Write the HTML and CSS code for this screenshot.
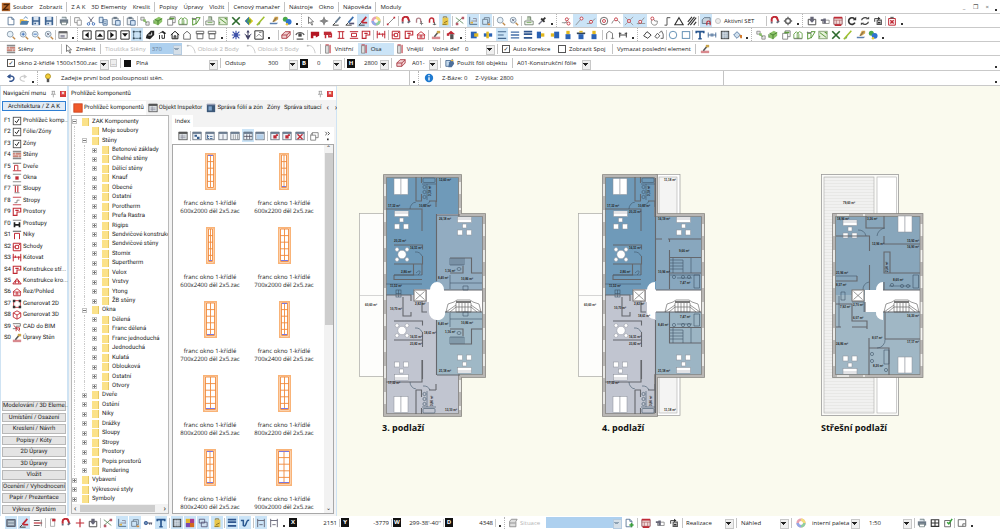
FILE: index.html
```html
<!DOCTYPE html>
<html lang="cs">
<head>
    <meta charset="UTF-8">
    <meta name="viewport" content="width=device-width, initial-scale=1.0">
    <title>ZAK</title>
    <link rel="stylesheet" href="styles.css">
</head>
<body>
    <header>
        <nav class="bar menu">
            <span class="logo" data-icon="logo"></span>
            <button>Soubor</button>
            <button>Zobrazit</button>
            <span class="sep"></span>
            <button>Z A K</button>
            <button>3D Elementy</button>
            <button>Kreslit</button>
            <span class="sep"></span>
            <button>Popisy</button>
            <button>Úpravy</button>
            <button>Vložit</button>
            <span class="sep"></span>
            <button>Cenový manažer</button>
            <span class="sep"></span>
            <button>Nástroje</button>
            <button>Okno</button>
            <span class="sep"></span>
            <button>Nápověda</button>
            <span class="sep"></span>
            <button>Moduly</button>
            <div class="window-buttons">
                <button>_</button>
                <button>❐</button>
                <button>×</button>
            </div>
            <span class="dot"></span>
        </nav>

        <div class="bar">
            <div class="tools t-file" data-tools="new open save save | print | copygray cut copy paste | paste | group cubes gcopy ghouse gflip | stamp gpic gx diamond gline brush rgb"></div>
            <span class="dot"></span>
            <div class="tools grip t-pen" data-tools="pointer move pen penblue penred* wheel | line | magnet magnetgray magnetsmall lockdoc* | axes frame* cube* | zoom zoomall | stamp dropper"></div>
            <span class="dot"></span>
            <div class="tools grip t-snap" data-tools="snap snapend* snapmid* snapcircle snaparc snapcross* snapnear* hand step triangle hatch | set*"></div>
            <label class="radio"><input type="radio" name="set">Aktivní SET</label>
            <div class="tools t-gear" data-tools="| magnet gear"></div>
            <span class="dot"></span>
            <div class="tools grip t-box" data-tools="box boxin calendar | refresh cycle cyclebox | redbox"></div>
            <span class="dot"></span>
        </div>

        <div class="bar">
            <div class="tools t-zoom" data-tools="zoom zoomin zoomout zoomall | window"></div>
            <span class="dot"></span>
            <div class="tools grip t-view" data-tools="left up right down bracket* blackbox househalf house houseline boxtop boxtop"></div>
            <span class="dot"></span>
            <div class="tools grip t-axis" data-tools="bluegrid axis3 boxview"></div>
            <span class="dot"></span>
            <div class="tools t-red" data-tools="| redcube | eye | redflag redwall redi redframe redcorner | dim | redhatch redcorner redhouse | redbrush | redroof"></div>
            <span class="dot"></span>
            <div class="tools grip t-align" data-tools="byalign bymid lines* lines2 lines3 byleft byright byvert bytop byvert | arch hshape"></div>
            <span class="dot"></span>
            <div class="tools grip t-shape" data-tools="poly polys | circle rect | text dimblue fillrect bucket"></div>
            <span class="dot"></span>
            <div class="tools grip t-group" data-tools="group cubes gcopy ghouse gflip gpic gx gline brush rgb"></div>
            <span class="dot"></span>
        </div>

        <div class="bar">
            <button class="cell c-wall"><span data-icon="wall"></span>Stěny</button>
            <span class="sep"></span>
            <button class="cell c-edit"><span data-icon="pointer"></span>Změnit</button>
            <span class="sep"></span>
            <label class="cell off" for="thickness">Tloušťka Stěny</label>
            <div class="combo blue w-s"><select id="thickness" disabled><option>370</option></select></div>
            <button class="cell off c-arc"><span data-icon="arcgray"></span>Oblouk 2 Body</button>
            <button class="cell off c-arc"><span data-icon="arcgray"></span>Oblouk 3 Body</button>
            <span class="cell off" data-icon="arcgray"></span>
            <span class="sep"></span>
            <button class="cell c-side"><span data-icon="inner"></span>Vnitřní</button>
            <button class="cell c-side on"><span data-icon="inner"></span>Osa</button>
            <button class="cell c-side"><span data-icon="inner"></span>Vnější</button>
            <label class="cell" for="offset">Volně def</label>
            <div class="combo w-s"><select id="offset"><option>0</option></select></div>
            <span class="sep"></span>
            <label class="cell c-check"><input type="checkbox" checked>Auto Korekce</label>
            <label class="cell c-check"><input type="checkbox">Zobrazit Spoj</label>
            <span class="sep"></span>
            <button class="cell">Vymazat poslední element</button>
            <span class="sep"></span>
            <button class="cell" aria-label="Štětec"><span data-icon="redbrush"></span></button>
        </div>

        <div class="bar bar-tall">
            <input class="check-first" type="checkbox" checked aria-label="Aktivní">
            <div class="combo w-xl"><select aria-label="Komponent"><option>okno 2-křídlé 1500x1500.zac</option></select></div>
            <button class="more">...</button>
            <span class="sep"></span>
            <span class="swatch"></span>
            <div class="combo w-l"><select aria-label="Typ čáry"><option>Plná</option></select></div>
            <span class="sep"></span>
            <label class="cell c-gap" for="gap">Odstup</label>
            <div class="combo w-s"><select id="gap"><option>300</option></select></div>
            <label class="key" for="dim-b">B</label>
            <div class="combo value w-s"><select id="dim-b"><option>0</option></select></div>
            <span class="sep"></span>
            <label class="key" for="dim-h">H</label>
            <div class="combo value w-s"><select id="dim-h"><option>2800</option></select></div>
            <span class="sep"></span>
            <span class="cell" data-icon="redcube"></span>
            <div class="combo w-xs"><select aria-label="Fólie"><option>A01-</option></select></div>
            <span class="sep"></span>
            <button class="cell c-foil"><span data-icon="foil"></span>Použít fóli objektu</button>
            <span class="sep"></span>
            <div class="combo w-m"><select aria-label="Fólie objektu"><option>A01-Konstrukční fólie</option></select></div>
            <span class="dot last"></span>
        </div>

        <div class="bar bar-tall">
            <div class="tools t-undo" data-tools="undo redo"></div>
            <span class="dot"></span>
            <div class="message grip"><span data-icon="bulb"></span>Zadejte první bod posloupnosti stěn.</div>
            <span class="dot"></span>
            <div class="info grip"><span data-icon="info"></span><span>Z-Báze: 0</span><span>Z-Výška: 2800</span></div>
            <span class="dot last"></span>
        </div>
    </header>

    <main>
        <aside class="panel navigation">
            <h2 class="panel-title">Navigační menu<span class="pin" data-icon="pin"></span><button class="close">×</button></h2>
            <button class="group-button active">Architektura / Z A K</button>
            <ul class="shortcuts"></ul>
            <div class="groups">
                <button class="group-button">Modelování / 3D Eleme...</button>
                <button class="group-button">Umístění / Osazení</button>
                <button class="group-button">Kreslení / Návrh</button>
                <button class="group-button">Popisy / Kóty</button>
                <button class="group-button">2D Úpravy</button>
                <button class="group-button">3D Úpravy</button>
                <button class="group-button">Vložit</button>
                <button class="group-button">Ocenění / Vyhodnocení</button>
                <button class="group-button">Papír / Prezentace</button>
                <button class="group-button">Výkres / Systém</button>
            </div>
        </aside>

        <aside class="panel components">
            <h2 class="panel-title">Prohlížeč komponentů<span class="pin" data-icon="pin"></span><button class="close">×</button></h2>
            <div class="tabs">
                <button class="tab active"><span data-icon="orange"></span>Prohlížeč komponentů</button>
                <button class="tab"><span data-icon="sheet"></span>Objekt Inspektor</button>
                <button class="tab"><span data-icon="zones"></span>Správa fólií a zón</button>
                <button class="tab">Zóny</button>
                <button class="tab">Správa situací</button>
                <button class="tab arrow">‹</button>
                <button class="tab arrow">›</button>
            </div>
            <div class="browser">
                <div class="tree-box">
                    <ul class="tree"></ul>
                    <div class="hscroll"><span>‹</span><i></i><span>›</span></div>
                </div>
                <div class="index">
                    <button class="index-tab">Index</button>
                    <div class="tools t-index" data-tools="sheet | tblsmall tbltree tblcol tblcols tblgrid* tblfill | tblred tblred tblx | cubegray more"></div>
                    <div class="list-box">
                        <div class="items"></div>
                        <div class="vscroll"><span>⌃</span><i></i><span>⌄</span></div>
                    </div>
                </div>
            </div>
        </aside>

        <section class="canvas">
            <svg viewBox="337 86 663 430" preserveAspectRatio="xMinYMin meet">
                <defs>
                    <pattern id="boards" width="6" height="3" patternUnits="userSpaceOnUse">
                        <rect width="6" height="3" fill="#f1f1f0"/>
                        <path d="M0 .5H6" stroke="#dededc" stroke-width=".5"/>
                    </pattern>
                    <g id="lounge" class="fur">
                        <rect x="0" y="0" width="14" height="5.500"/><path d="M0 2H14"/>
                        <rect x="5" y="7" width="4" height="4"/>
                        <rect x="0" y="13" width="5" height="5"/><rect x="9" y="13" width="5" height="5"/>
                    </g>
                    <g id="bed" class="fur"><rect width="7" height="16"/><rect x="7" width="7" height="16"/></g>
                    <g id="dining" class="fur">
                        <circle cx="-5" cy="-5" r="1.900"/><circle cx="5" cy="-5" r="1.900"/>
                        <circle cx="-5" cy="5" r="1.900"/><circle cx="5" cy="5" r="1.900"/><circle r="4.200"/>
                    </g>
                    <g id="lift"><rect width="12" height="11" fill="#fff" stroke="#77706c"/><path d="M1.500 1.500L10.500 9.500M10.500 1.500L1.500 9.500" stroke="#555" stroke-width=".6"/></g>
                    <g id="steps" fill="none" stroke="#555" stroke-width=".6">
                        <path d="M0 12L2 4L8 2L11 0H24L27 2L33 4L35 12M10 3V12H25V3M13 3V12M16 3V12M19 3V12M22 3V12M10 7H25M0 12L10 5M4 12L10 7M35 12L25 5M31 12L25 7"/>
                        <path d="M10 2H25" stroke-width="1.600"/>
                    </g>
                    <!-- left flat without the dining corner -->
                    <g id="flat">
                        <use href="#bed" x="11" y="4.500"/>
                        <use href="#lounge" x="11.500" y="37"/>
                        <path class="wall" d="M38.500 3V9M38.500 20V27H33M33 27V3M46 27H53M3 35H39V57M53 27V33"/>
                        <path class="thin" d="M39 10H53M44 10V26M47 27A7 7 0 0 1 40 31M27 35A7 7 0 0 1 33 28"/>
                        <rect class="thin" x="40" y="4" width="12" height="4.500" rx="1"/>
                        <circle class="thin" cx="41.500" cy="13" r="1.600"/><circle class="thin" cx="41.500" cy="18" r="1.600"/><circle class="thin" cx="41.500" cy="23" r="1.600"/>
                    </g>
                    <g id="diningroom">
                        <path class="wall" d="M11 0H39.500V4.500M39.500 11V19H11"/>
                        <use href="#dining" x="19" y="9.500"/>
                        <path class="thin" d="M39 11A7 7 0 0 0 32 7"/>
                    </g>
                    <g id="baths">
                        <path class="wall" d="M11 101V105.500H39M30.500 90V101H11M39 90V101"/>
                        <path class="thin" d="M3 110H39M11 101H39M33 99C38 94 38 99 35 101"/>
                        <rect class="thin" x="13" y="116" width="5" height="7"/><path class="thin" d="M13 119.500H18M15.500 116V123"/>
                    </g>
                    <g id="studio">
                        <path class="wall" d="M67 84H88.500V99H99M67 99H80V92"/>
                        <path class="thin" d="M67 84V91H81V84M69 84V91M71 84V91M73 84V91M75 84V91M77 84V91M79 84V91M67 109H99M67 101V115M80 112H85V116H80Z"/>
                        <ellipse class="thin" cx="76" cy="95" rx="2" ry="1.500"/>
                    </g>
                    <g id="flat-right">
                        <path class="wall" d="M67.500 65V68M67.500 76V115M67.500 83.500H99M67.500 99H99"/>
                        <path class="thin" d="M68 86H81V98.500M68 89H81M68 92H81M68 95H81M89 84V99M71 84V99M68 101H98M92 101H97.500V114H92ZM75 104H90"/>
                        <circle class="thin" cx="72" cy="103" r="1.600"/><circle class="thin" cx="81" cy="103" r="1.600"/><circle class="thin" cx="87" cy="103" r="1.600"/>
                    </g>
                </defs>

                <!-- 3. podlaží -->
                <g transform="translate(383 174)">
                    <rect x="-23.500" y="39.500" width="24" height="163" fill="#fdfdfb" stroke="#a8a8a4" stroke-width=".7"/>
                    <path d="M-23.500 121.500H0" stroke="#bbb" stroke-width=".6"/>
                    <path fill="#c1c5d0" d="M2 2H77V40H101V202H77V241H2Z"/>
                    <path fill="#6f9ab9" d="M2 2H77V40H54V115H31V121H2Z"/>
                    <path fill="#92acc1" d="M54 41H100V116H54Z"/>
                    <path fill="#9fb8c6" d="M54 138H100V201H54Z"/>
                    <path fill="#fff" d="M44 116H47A7 8 0 0 1 54 108A7 8 0 0 1 61 116H99V138H62A7 7 0 0 1 54 146A8 8 0 0 1 46 138V128H44Z"/>
                    <path class="outer-line" d="M2 2H77V41H101V202H77V241H2Z"/>
                    <path class="outer" d="M2 2H77V41H101V202H77V241H2Z"/>
                    <path class="panes" d="M2 10V236M101 50V196M77 8V36M77 206V236"/>
                    <use href="#flat"/>
                    <use href="#flat" transform="matrix(1 0 0 -1 0 243)"/>
                    <use href="#diningroom" y="71"/>
                    <use href="#diningroom" y="147"/>
                    <use href="#baths"/>
                    <path class="wall" d="M53.500 4V28M53.500 40V107M53.500 146V201M54 41H77M54 201H77M61 116H99M62 138H99M3 121H28V127M28 138V142H20V123M39 127V138H44M39.500 166V173M39.500 186V205"/>
                    <use href="#lounge" x="74.500" y="43"/>
                    <use href="#lounge" transform="matrix(1 0 0 -1 74.500 199)"/>
                    <use href="#studio"/>
                    <use href="#studio" transform="matrix(1 0 0 -1 0 254)"/>
                    <use href="#lift" x="31" y="116"/>
                    <use href="#steps" x="63" y="126"/>
                    <text x="5" y="33">17,32 m²</text><text x="36" y="33">10,60 m²</text><text x="56" y="7">12,60 m²</text>
                    <text x="11" y="68">20,23 m²</text><text x="27" y="75">16,51 m²</text><text x="18" y="99">2,86 m²</text>
                    <text x="7" y="113">11,52 m²</text><text x="56" y="46">26,18 m²</text><text x="62" y="98">1,16 m²</text>
                    <text x="55" y="105">8,40 m²</text><text x="78" y="106">10,86 m²</text><text x="-18" y="132">60,60 m²</text>
                    <text x="7" y="136">10,70 m²</text><text x="32" y="131">2,82 m²</text><text x="41" y="160">18,61 m²</text>
                    <text x="27" y="164">16,51 m²</text><text x="27" y="171">23,82 m²</text><text x="55" y="151">8,40 m²</text>
                    <text x="62" y="159">1,16 m²</text><text x="78" y="150">10,86 m²</text><text x="56" y="198">21,18 m²</text>
                    <text x="5" y="210">17,32 m²</text><text x="62" y="237">13,10 m²</text>
                    <text transform="translate(48 22) rotate(-90)">3,78 m²</text><text transform="translate(50 232) rotate(-90)">3,86 m²</text>
                </g>

                <!-- 4. podlaží -->
                <g transform="translate(602 174)">
                    <rect x="-23.500" y="39.500" width="24" height="163" fill="#fdfdfb" stroke="#a8a8a4" stroke-width=".7"/>
                    <path d="M-23.500 121.500H0" stroke="#bbb" stroke-width=".6"/>
                    <rect x="54" y=".5" width="24" height="241" fill="#fff" stroke="#999" stroke-width=".7"/>
                    <rect x="57" y="3" width="18" height="236" fill="#f4f4f3" stroke="#aaa" stroke-width=".6"/>
                    <path fill="#c1c5d0" d="M2 2H54V241H2Z"/>
                    <path fill="#6f9ab9" d="M2 2H54V115H31V121H2Z"/>
                    <path fill="#88a7be" d="M54 41H101V116H54Z"/>
                    <path fill="#9cb5c4" d="M54 138H101V201H54Z"/>
                    <path fill="#fff" d="M44 116H45A8 8 0 0 1 53 108V116H99V138H53V145A7 7 0 0 1 45 138V128H44Z"/>
                    <path class="outer-line" d="M2 2H54V41H101V202H54V241H2Z"/>
                    <path class="outer" d="M2 2H54V41H101V202H54V241H2Z"/>
                    <path fill="#fff" d="M50 116H60V138H50Z"/>
                    <path class="panes" d="M2 10V236M101 50V196"/>
                    <use href="#flat"/>
                    <use href="#flat" transform="matrix(1 0 0 -1 0 243)"/>
                    <use href="#diningroom" y="71"/>
                    <use href="#diningroom" y="147"/>
                    <use href="#baths"/>
                    <path class="wall" d="M53.500 4V107M53.500 146V239M54 116H99M54 138H99M3 121H28V127M28 138V142H20V123M39 127V138H44M54 65H60M66 65H99M39.500 166V173M39.500 186V205"/>
                    <use href="#lounge" x="74.500" y="43"/>
                    <use href="#lounge" transform="matrix(1 0 0 -1 74.500 199)"/>
                    <use href="#flat-right"/>
                    <path class="wall" d="M67.500 138V169H99M67.500 153.500H99"/>
                    <path class="thin" d="M68 156H81V169M68 159H81M68 162H81M68 165H81M89 154V169M71 154V169M92 140H97.500V152H92ZM75 150H90"/>
                    <circle class="thin" cx="72" cy="151" r="1.600"/><circle class="thin" cx="81" cy="151" r="1.600"/><circle class="thin" cx="87" cy="151" r="1.600"/>
                    <use href="#lift" x="31" y="116"/>
                    <use href="#steps" x="63" y="126"/>
                    <text x="5" y="33">17,32 m²</text><text x="36" y="33">10,60 m²</text><text x="62" y="7">11,18 m²</text>
                    <text x="27" y="39">20,23 m²</text><text x="27" y="75">16,51 m²</text><text x="18" y="99">2,86 m²</text>
                    <text x="7" y="113">11,52 m²</text><text x="56" y="46">16,19 m²</text><text x="77" y="78">9,66 m²</text>
                    <text x="56" y="99">10,96 m²</text><text x="78" y="110">7,47 m²</text><text x="-18" y="132">60,60 m²</text>
                    <text x="12" y="135">10,70 m²</text><text x="32" y="131">2,82 m²</text><text x="36" y="143">18,61 m²</text>
                    <text x="27" y="164">16,51 m²</text><text x="27" y="171">23,82 m²</text><text x="78" y="144">7,47 m²</text>
                    <text x="56" y="152">8,40 m²</text><text x="56" y="198">21,18 m²</text>
                    <text x="5" y="210">17,32 m²</text><text x="62" y="237">11,18 m²</text>
                    <text transform="translate(48 22) rotate(-90)">3,78 m²</text><text transform="translate(50 232) rotate(-90)">3,86 m²</text>
                </g>

                <!-- Střešní podlaží -->
                <g transform="translate(821 174)">
                    <rect x=".5" y=".5" width="77" height="241" fill="#fbfbf8" stroke="#999" stroke-width=".8"/>
                    <rect x="3" y="3" width="50" height="236" fill="url(#boards)" stroke="#aaa" stroke-width=".6"/>
                    <rect x="56" y="3" width="19.500" height="236" fill="#fff" stroke="#aaa" stroke-width=".6"/>
                    <path fill="#88a6bb" d="M13 41H100V118H44V121H13Z"/>
                    <path fill="#a0b7c5" d="M13 121H44V138H100V201H13Z"/>
                    <path fill="#fff" d="M44 116H55A7 8 0 0 1 62 108V116H99V138H62V146A7 7 0 0 1 55 138H44Z"/>
                    <rect class="outer-line" x="13" y="41" width="87.500" height="161"/>
                    <rect class="outer" x="13" y="41" width="87.500" height="161"/>
                    <path class="panes" d="M13 50V196M100.500 50V196M16 41H44M16 202H44"/>
                    <use href="#lounge" x="22" y="46"/>
                    <use href="#bed" x="77" y="42"/>
                    <use href="#bed" x="77" y="183"/>
                    <use href="#lounge" transform="matrix(1 0 0 -1 22 200)"/>
                    <path class="wall" d="M45 42V54H63V42M15 62H48.500V77M48.500 91V116M63 62V70H99M63 78H69V99H63ZM15 107H36V102M63 99H99M63 116V108M62 116H99M62 138H99M44 138V128M15 130H31V147H46V153H31M46 147V155M15 153H20M64 138V165M64 165H99M48 164V201M48 174H68V201"/>
                    <path class="thin" d="M37 56A8 8 0 0 1 45 62M56 62A9 9 0 0 1 64 54M42 116A8 8 0 0 1 48 108M92 101H97.500V114H92ZM68 112H90M18 122V153M20 118H24V126H20ZM63 176H68V190H63ZM56 174A8 8 0 0 0 64 165M15 102H36M31 128H43V138"/>
                    <circle class="thin" cx="71" cy="111" r="1.600"/><circle class="thin" cx="81" cy="112" r="1.600"/><circle class="thin" cx="87" cy="112" r="1.600"/>
                    <circle class="thin" cx="51" cy="180" r="1.600"/><circle class="thin" cx="51" cy="187" r="1.600"/><circle class="thin" cx="65" cy="196" r="1.600"/>
                    <use href="#lift" x="31" y="116"/>
                    <use href="#steps" x="63" y="126"/>
                    <text x="22" y="30">79,60 m²</text><text x="16" y="46">18,96 m²</text><text x="46" y="46">3,26 m²</text>
                    <text x="51" y="71">12,96 m²</text><text x="86" y="68">15,92 m²</text><text x="86" y="74">16,90 m²</text>
                    <text x="15" y="100">21,96 m²</text><text x="15" y="112">8,37 m²</text><text x="72" y="107">8,60 m²</text>
                    <text x="19" y="134">7,92 m²</text><text x="32" y="132">2,70 m²</text><text x="32" y="145">6,07 m²</text>
                    <text x="86" y="143">16,30 m²</text><text x="51" y="165">8,07 m²</text><text x="15" y="171">24,86 m²</text>
                    <text x="86" y="169">17,17 m²</text><text x="52" y="193">8,20 m²</text>
                    <text transform="translate(67 98) rotate(-90)">2,56 m²</text>
                </g>

                <text class="floor" x="382" y="431">3. podlaží</text>
                <text class="floor" x="602" y="431">4. podlaží</text>
                <text class="floor" x="821" y="431">Střešní podlaží</text>
            </svg>
        </section>
    </main>

    <footer class="bar">
        <div class="tools t-status" data-tools="keyboard* penred* listred | redpage magnet cross box | axes frame* cube* key text* | fillrect* colorbox* layers* lockdoc* | lines3* curve* | dimh* dimh"></div>
        <span class="dot"></span>
        <label class="key" for="pos-x">X</label><input class="coord" id="pos-x" value="2151">
        <label class="key" for="pos-y">Y</label><input class="coord" id="pos-y" value="-3779">
        <label class="key" for="pos-w">W</label><input class="coord" id="pos-w" value="299-38'-40''">
        <label class="key" for="pos-d">D</label><input class="coord" id="pos-d" value="4348">
        <span class="dot"></span>
        <label class="cell off grip c-situation" for="situation"><span data-icon="drawer"></span>Situace</label>
        <div class="combo blue w-m"><select id="situation" disabled><option></option></select></div>
        <div class="tools t-sit" data-tools="addpage | calendar boxin cyclebox |"></div>
        <div class="combo w-n"><select aria-label="Fáze"><option>Realizace</option></select></div>
        <span class="sep"></span>
        <div class="combo w-n"><select aria-label="Zobrazení"><option>Náhled</option></select></div>
        <span class="sep"></span>
        <span class="cell" data-icon="wheel"></span>
        <div class="combo w-n"><select aria-label="Paleta"><option>interní paleta</option></select></div>
        <div class="combo value w-n"><select aria-label="Měřítko"><option>1:50</option></select></div>
        <span class="sep"></span>
        <div class="tools t-end" data-tools="print grid4 checkpage | note"></div>
        <span class="dot"></span>
    </footer>

    <script src="script.js"></script>
</body>
</html>
```

FILE: styles.css
```css
* {
    box-sizing: border-box;
}

body {
    display: flex;
    flex-direction: column;
    height: 100vh;
    margin: 0;
    overflow: hidden;
    background: #fff;
    color: #222;
    font-family: "Open Sans", "Noto Sans", sans-serif;
    font-size: 6px;
    line-height: 8px;
}

button, select, input {
    margin: 0;
    padding: 0;
    border: 0;
    border-radius: 0;
    background: none;
    color: inherit;
    font: inherit;
    text-rendering: inherit;
    white-space: nowrap;
}

ul {
    margin: 0;
    padding: 0;
    list-style: none;
}

svg {
    display: block;
}

[data-icon] {
    display: block;
    flex: none;
    width: 10px;
    height: 10px;
}

/* bars */
.bar {
    display: flex;
    align-items: center;
    height: 14px;
    border-bottom: 1px solid #c9c9c9;
    white-space: nowrap;
}

.bar-tall {
    height: 15px;
}

.menu button {
    padding: 0 3px;
}

.logo {
    margin: 0 -1px 0 1px;
}

.sep {
    flex: none;
    width: 1px;
    height: 10px;
    margin: 0 1px;
    background: #c4c4c4;
}

.window-buttons {
    margin-left: auto;
    color: #555;
}

.dot {
    flex: none;
    width: 2px;
    height: 2px;
    margin: 7px 3px 0;
    background: #333;
}

.dot.last {
    margin-left: auto;
}

.grip {
    border-left: 1px dotted #b5b5b5;
}

.tools {
    display: flex;
    flex: none;
    align-items: center;
    justify-content: space-between;
    padding-left: 5px;
}

.tools.grip {
    padding-left: 3px;
}

.tools .sep {
    margin: 0;
}

.tool {
    display: flex;
    align-items: center;
    justify-content: center;
    width: 12px;
    height: 13px;
}

.tool svg {
    width: 10px;
    height: 10px;
}

.on {
    background: #cbe4f7;
}

.t-file { width: 293px; }
.t-pen { width: 247px; }
.t-snap { width: 156px; }
.t-gear { width: 28px; padding: 0; margin-left: 12px; }
.t-box { width: 96px; }
.t-zoom { width: 69px; }
.t-view { width: 141px; }
.t-axis { width: 39px; }
.t-red { width: 184px; }
.t-align { width: 164px; }
.t-shape { width: 106px; }
.t-group { width: 128px; }
.t-undo { width: 29px; }
.t-status { width: 280px; }
.t-sit { width: 60px; padding: 0; }
.t-end { width: 52px; padding: 0; }

.radio {
    display: flex;
    align-items: center;
    gap: 3px;
}

input[type="radio"] {
    width: 6px;
    height: 6px;
    appearance: none;
    border: 1px solid #c4c4c4;
    border-radius: 50%;
    background: #eee;
    margin-left: 3px;
}

input[type="checkbox"] {
    flex: none;
    width: 8px;
    height: 8px;
    appearance: none;
    border: 1px solid #555;
    background: #fff;
    line-height: 6px;
    text-align: center;
}

input[type="checkbox"]:checked::before {
    content: "✓";
    font-family: "DejaVu Sans", sans-serif;
    color: #222;
}

.cell {
    display: flex;
    flex: none;
    align-items: center;
    gap: 2px;
    height: 12px;
    margin: 0 3px;
}

.off {
    color: #b4b4b4;
}

.cell.on {
    background: #cbe4f7;
}

.c-wall { width: 54px; padding-left: 3px; }
.c-edit { width: 34px; margin: 0 1px; }
.c-arc { width: 54px; }
.c-side { width: 36px; margin: 0; padding-left: 1px; }
.c-check { width: 50px; gap: 3px; }
.c-gap { width: 37px; }
.c-foil { width: 63px; }
.c-situation { width: 37px; padding-left: 3px; margin: 0 4px 0 0; }

.combo {
    position: relative;
    flex: none;
    height: 11px;
    margin: 0 1px;
}

.combo select {
    width: 100%;
    height: 100%;
    appearance: none;
    padding: 0 9px 0 2px;
    opacity: 1;
}

.combo.value select {
    padding-left: 7px;
}

/* drop-down arrow over the right end of the field */
.combo::after {
    content: "";
    position: absolute;
    right: 0;
    top: 2px;
    width: 7px;
    height: 8px;
    border: 1px solid #c8c8c8;
    background: linear-gradient(#222, #222) 0 2px / 5px 1px no-repeat, linear-gradient(#222, #222) 1px 3px / 3px 1px no-repeat, linear-gradient(#222, #222) 2px 4px / 1px 1px no-repeat, #efefef;
    pointer-events: none;
}

.combo.blue select {
    background: #add0ef;
    color: #6c8198;
}

.combo.blue::after {
    border-color: #b5cbe0;
    background: linear-gradient(#8fa3b5, #8fa3b5) 0 2px / 5px 1px no-repeat, linear-gradient(#8fa3b5, #8fa3b5) 1px 3px / 3px 1px no-repeat, #d5dfe8;
}

.w-xs { width: 28px; }
.w-s { width: 32px; }
.w-n { width: 50px; }
.w-m { width: 76px; }
.w-l { width: 84px; }
.w-xl { width: 93px; }

.check-first {
    margin-left: 7px;
}

.more {
    width: 7px;
    height: 8px;
    margin-right: 2px;
    border: 1px solid #ccc;
    background: #eee;
    color: #777;
    line-height: 4px;
}

.swatch {
    width: 7px;
    height: 7px;
    margin: 0 2px;
    background: #111;
}

.key {
    flex: none;
    width: 8px;
    height: 9px;
    margin: 0 1px;
    background: #111;
    color: #fff;
    font-weight: bold;
    line-height: 9px;
    text-align: center;
}

.coord {
    width: 42px;
    border-right: 1px solid #ccc;
    padding-right: 2px;
    text-align: right;
}

.message, .info {
    display: flex;
    align-items: center;
    gap: 8px;
    height: 14px;
    padding-left: 5px;
    border-right: 1px solid #c4c4c4;
}

.message {
    width: 373px;
}

.info {
    width: 306px;
}

/* panels */
main {
    display: flex;
    flex: 1;
    min-height: 0;
}

.panel {
    display: flex;
    flex: none;
    flex-direction: column;
    padding: 1px 2px 2px;
    border-left: 1px solid #cfe3f3;
    border-right: 1px solid #cfe3f3;
    font-family: Roboto, "Liberation Sans", sans-serif;
    text-rendering: geometricPrecision;
}

.navigation {
    width: 68px;
    padding: 1px 1px 2px;
}

.components {
    width: 269px;
    background: #f3f3f3;
}

.panel-title {
    display: flex;
    flex: none;
    align-items: center;
    height: 13px;
    margin: 0;
    padding-left: 1px;
    font-size: 6px;
    font-weight: normal;
}

.components .panel-title {
    margin: 0 -2px;
    padding: 0 3px 0 2px;
    background: #fff;
}

.pin {
    width: 8px;
    height: 8px;
    margin-left: auto;
}

.close {
    width: 6px;
    height: 6px;
    margin-left: 3px;
    background: #d63a3a;
    color: #fff;
    font-weight: bold;
    line-height: 6px;
}

.group-button {
    flex: 1;
    min-height: 0;
    border: 1px solid #b8b8b8;
    background: #e4e4e4;
    line-height: 7px;
}

.group-button.active {
    flex: none;
    height: 10px;
    margin-top: 1px;
    border-color: #2f7fd3;
    background: #e2ecf6;
}

.shortcuts {
    display: grid;
    grid-auto-rows: 1fr;
    height: 229px;
    margin-top: 4px;
}

.shortcuts li {
    display: flex;
    align-items: center;
    gap: 1px;
    padding-left: 2px;
    white-space: nowrap;
}

.shortcuts b {
    width: 7px;
    font-weight: normal;
}

.groups {
    display: flex;
    flex-direction: column;
    gap: 2px;
    height: 113px;
    margin-top: auto;
}

.tabs {
    display: flex;
    flex: none;
    align-items: center;
    height: 15px;
}

.tab {
    display: flex;
    flex: none;
    align-items: center;
    gap: 1px;
    height: 14px;
    padding: 0 2px;
}

.tab.active {
    background: #fff;
}

.tab.arrow {
    padding: 0 3px;
    font-size: 8px;
}

.browser {
    display: flex;
    flex: 1;
    gap: 3px;
    min-height: 0;
}

.tree-box {
    display: flex;
    flex-direction: column;
    width: 98px;
    border: 1px solid #b9b9b9;
    background: #fff;
}

.tree {
    display: grid;
    flex: 1;
    grid-auto-rows: 1fr;
    padding-top: 1px;
    overflow: hidden;
}

.tree li {
    display: flex;
    align-items: center;
    min-height: 0;
    white-space: nowrap;
}

.guide {
    flex: none;
    align-self: stretch;
    width: 8px;
    margin-left: 2px;
    border-left: 1px dotted #ccc;
}

.toggle {
    flex: none;
    width: 5px;
    height: 5px;
    border: 1px solid #c2c2c2;
    background: linear-gradient(#777, #777) 0 1px / 3px 1px no-repeat, #fff;
}

.toggle.none {
    border-color: transparent;
    background: none;
}

.toggle.plus {
    background: linear-gradient(#777, #777) 0 1px / 3px 1px no-repeat, linear-gradient(#777, #777) 1px 0 / 1px 3px no-repeat, #fff;
}

.folder {
    flex: none;
    width: 7px;
    height: 8px;
    margin: 0 3px 0 5px;
    border-right: 1px solid #e6c964;
    background: #fbe28a;
}

.hscroll, .vscroll {
    display: flex;
    align-items: center;
    justify-content: space-between;
    background: #f2f2f2;
}

.hscroll {
    height: 9px;
    padding: 0 2px;
    font-size: 8px;
}

.hscroll i {
    width: 75px;
    height: 7px;
    margin-right: 5px;
    background: #cdcdcd;
}

.index {
    display: flex;
    flex: 1;
    flex-direction: column;
    min-width: 0;
    background: #f3f3f3;
}

.index-tab {
    align-self: flex-start;
    width: 21px;
    height: 12px;
    background: #fff;
    font-family: "Open Sans", sans-serif;
}

.t-index {
    height: 17px;
    padding: 0 1px 0 5px;
    background: #fff;
}

.list-box {
    display: flex;
    flex: 1;
    min-height: 0;
    border: 1px solid #a8a8a8;
    background: #fff;
}

.items {
    display: grid;
    flex: 1;
    grid-template-columns: 74px 74px;
    grid-auto-rows: 74px;
    padding-top: 8px;
    overflow: hidden;
    font-family: "Open Sans", sans-serif;
    line-height: 8px;
    text-align: center;
}

.item svg {
    height: 37px;
    margin: 0 auto 9px;
}

.item p {
    margin: 0;
}

.vscroll {
    flex-direction: column;
    width: 9px;
}

.vscroll i {
    width: 8px;
    height: 172px;
    margin-bottom: auto;
    background: #cdcdcd;
}

/* drawing */
.canvas {
    flex: 1;
    min-width: 0;
    background: #fafaee;
}

.canvas svg {
    width: 100%;
    height: 100%;
}

.canvas text {
    fill: #222;
    font-family: "Liberation Sans", Arial, sans-serif;
    font-size: 3px;
    font-weight: bold;
}

.canvas .floor {
    fill: #111;
    font-family: "Open Sans", sans-serif;
    font-size: 9px;
}

.fur {
    fill: #fff;
    stroke: #8a8f98;
    stroke-width: .5;
}

.wall {
    fill: none;
    stroke: #65676c;
    stroke-width: 1.1;
}

.thin {
    fill: none;
    stroke: #3f5668;
    stroke-width: .6;
}

.outer-line {
    fill: none;
    stroke: #76736f;
    stroke-width: 3.6;
}

.outer {
    fill: none;
    stroke: #b9b7b5;
    stroke-width: 2.4;
}

.panes {
    fill: none;
    stroke: #f3f3f0;
    stroke-width: 1.6;
    stroke-dasharray: 12 14;
}

footer.bar {
    flex: none;
    height: 13px;
    border-bottom: 0;
}
```

FILE: script.js
```js
const G = '#5b9a3c';   // green
const R = '#c02a35';   // red
const B = '#2b62b4';   // blue
const K = '#444';

function line(d, color, width) {
    return `<path d="${d}" fill="none" stroke="${color || K}" stroke-width="${width || 1.2}"/>`;
}

function fill(d, color) {
    return `<path d="${d}" fill="${color || K}"/>`;
}

const doc = fill('M2 1H7L10 4V11H2Z', '#fff') + line('M2.500 1.500H7L9.500 4V10.500H2.500ZM7 1.500V4H9.500', '#4f6d8f', 1);
const lens = '<circle cx="5" cy="5" r="3.500" fill="#e6f1f9" stroke="#8495a5"/>' + line('M8 8L11 11', '#c08a4a', 1.6);
const frameBox = line('M1 1H11V11H1Z', '#333', 1.2);
const magnet = line('M2 7V5A3.500 3.500 0 0 1 9 4L10 6', R, 2.4) + line('M2 7V9M8 8L11 6', '#667', 2.2);
const table = '<rect x="1" y="1.500" width="10" height="9" fill="#eef3f8" stroke="#67707c"/>' + fill('M1 1H11V3.500H1Z', '#6b7c90');
const blueDot = (x, y, w, h) => fill(`M${x} ${y}h${w}v${h}h-${w}Z`, B);
const yellowDot = (x, y, w, h) => fill(`M${x} ${y}h${w}v${h}h-${w}Z`, '#e2b81f');
const pencil = (c) => line('M4 8L10 1', c, 2) + line('M1 11L4 8M1 11H8', K, 1.2);
const snapPoint = (x, y) => `<circle cx="${x}" cy="${y}" r="1.800" fill="#fff" stroke="${R}"/>`;

const icons = {
    logo: '<rect x="1" y="1" width="10" height="10" fill="#b8682a"/>' + line('M3 3H9L3 9H9', '#4d2408', 1.6),
    new: doc,
    open: fill('M1 4H5L6 5H10V10H1Z', '#e8b84b') + fill('M3 6H12L10 10.500H1Z', '#4d7fae') + line('M6 3C8 0 9 1 10 3', '#4d7fae'),
    save: fill('M1 1H11V11H1Z', '#3e6492') + fill('M3 1H9V5H3ZM3 7H9V11H3Z', '#dbe6f2') + fill('M4 8H6V10H4Z', '#3e6492'),
    print: fill('M3 1H9V4H3Z', '#d9e1e8') + fill('M1 4H11V9H1Z', '#6c7a88') + fill('M3 7H9V11H3Z', '#fff') + line('M3 7.500H9V10.500H3ZM3.500 1.500H8.500V4', '#566', .8),
    copygray: line('M2 2H8M2 2V8H5', '#999') + line('M5 5H10V11H5Z', '#8a8a8a', 1) + line('M7 3L9 4', '#888'),
    cut: line('M3 1L8 8M9 1L4 8', '#667', 1.1) + '<circle cx="3" cy="9.500" r="1.500" fill="none" stroke="#2b62b4"/><circle cx="9" cy="9.500" r="1.500" fill="none" stroke="#2b62b4"/>',
    copy: '<path d="M1.500 1.500H6V8H1.500ZM6 4.500H11V11H6Z" fill="#dceaf7" stroke="#44668f"/>' + line('M7 7H10M7 9H10', '#44668f', .8),
    paste: '<path d="M1.500 2.500H8.500V10.500H1.500Z" fill="#e9eef3" stroke="#6a7886"/>' + fill('M3 1H7V3.500H3Z', '#6a7886') + '<path d="M5.500 5.500H11V11H5.500Z" fill="#d3e5f7" stroke="#44668f"/>',
    group: '<path d="M1 1.500H5V5H1ZM7 7H11V11H7Z" fill="#e9e9e9" stroke="#888"/>' + line('M4 5L8 8', G) + fill('M4 4H7V7H4Z', '#8abf6a'),
    cubes: fill('M2 4L7 1L11 3V7L6 11L1 9Z', '#8cc268') + line('M2 4L6 6L11 3M6 6V11M1 9V5', '#3f7a2a', 1),
    gcopy: line('M2 4H8V11H2ZM5 4V1H11V8H8', '#777', 1) + fill('M4 2H10V4H4Z', G),
    ghouse: line('M1 10V5L4 2L7 5V10ZM5 10V4L8 2L11 4V10Z', G, 1) + line('M1 10.500H11', '#777', 1),
    gflip: line('M2 2V11L6 9V4H2M6 10L11 2H6', G, 1.2) + line('M1 3H7', '#777', 1),
    stamp: fill('M4 1H8L9 5H3Z', '#b9cbb3') + line('M1 6H11V10.500H1ZM4 1H8V5', '#6a7a66', 1) + line('M3 8H9', G, 1),
    gpic: '<rect x="1" y="1.500" width="10" height="9" fill="#e4f0d8" stroke="#7b9a6b"/>' + line('M2 3L10 9M8 3H10V5M2 9V7', G, 1.2),
    gx: line('M1.500 1.500L10.500 10.500M10.500 1.500L1.500 10.500', '#2d6a2d', 2),
    diamond: fill('M6 1L11 6L6 11L1 6Z', '#d8c71f') + fill('M6 1L1 6L6 11Z', '#2e72b8') + fill('M4 4H8V8H4Z', '#5aa344'),
    gline: line('M1 11L10 1', '#9fbf2c', 1.8) + line('M3 11L5 8', G, 1),
    brush: fill('M7 1H11V4L7 7H4Z', '#d2a24a') + fill('M1 8H11L9 10H1Z', '#5b7fae') + line('M5 7L9 2', '#555', 1),
    rgb: '<circle cx="4" cy="4" r="3" fill="#4aa84a"/><circle cx="8" cy="7" r="3.500" fill="#2f74d0"/><circle cx="6" cy="10" r="1.500" fill="#e8c53a"/>',
    pointer: '<path d="M3 1V9L5 7.500L7 11L8 10.500L6.500 7H9Z" fill="#fff" stroke="#555" stroke-width=".9"/>',
    move: line('M6 1V11M1 6H11M3 6L6 3L9 6L6 9Z', '#555', 1.1),
    pen: pencil('#6b7f93'),
    penblue: pencil('#3a6fae') + fill('M5 8H11V10H5Z', '#557'),
    penred: pencil(R) + fill('M5 7H11V9H5Z', R),
    wheel: '<circle cx="6" cy="6" r="4" fill="none" stroke="#e8a0b0" stroke-width="3"/><path d="M6 2A4 4 0 0 1 10 6" fill="none" stroke="#f3e07a" stroke-width="3"/><path d="M10 6A4 4 0 0 1 6 10" fill="none" stroke="#8fd0a0" stroke-width="3"/><path d="M6 10A4 4 0 0 1 2 6" fill="none" stroke="#92a8e8" stroke-width="3"/>',
    line: line('M2 10L10 2', '#777', 1) + fill('M1 9H3V11H1ZM9 1H11V3H9Z', R),
    magnet: magnet,
    magnetgray: line('M3 8V5A2.500 2.500 0 0 1 8 5V8', '#b08088', 1.6) + line('M9 6V11M7 9H11', '#777', 1),
    magnetsmall: line('M3 8V5A2.500 2.500 0 0 1 8 5V8', R, 1.8) + line('M9 7V11M7 10H11', '#555', 1),
    lockdoc: fill('M3 2H10V11H3Z', '#e9c74a') + line('M4 2V1H8V2M5 8L9 6M3 10H8', '#7a6420', 1),
    axes: line('M1 2L10 9M1 9L9 2', '#5b8a5b', 1) + fill('M8 1H11V4H8ZM1 8H4V11H1Z', '#b85a6a'),
    frame: line('M2 1V10H11', '#55718f', 1.2) + line('M4 6H10M6 3H10V7', '#889', 1) + fill('M3 7H6V9H3Z', '#e0b040'),
    cube: line('M2 4H8V10H2ZM4 4V2H10V8H8', '#667788', 1) + fill('M8 9H11V11H8Z', '#d28b3a'),
    zoom: lens,
    zoomin: lens + line('M3 5H7M5 3V7', B, 1),
    zoomout: lens + line('M3 5H7', B, 1),
    zoomall: lens + line('M3.500 3.500L6.500 6.500M6.500 3.500L3.500 6.500', '#667', 1),
    dropper: line('M2 10L7 5', '#778', 1.6) + line('M5 3L9 7M7 5L10 2', '#333', 2.2),
    snap: line('M1 8H8M4 9L10 3', '#888', 1) + snapPoint(7, 4) + snapPoint(9, 9),
    snapend: line('M2 11L9 3', '#888', 1) + snapPoint(9, 3),
    snapmid: line('M1 9H5L11 3', '#888', 1) + snapPoint(6, 7),
    snapcircle: '<circle cx="6" cy="6" r="4.500" fill="none" stroke="#555"/>' + snapPoint(6, 6),
    snaparc: line('M1 9C3 3 8 3 11 9', '#777', 1) + snapPoint(6, 4),
    snapcross: line('M1 1L11 11M11 1L1 11', '#999', 1) + snapPoint(6, 6),
    snapnear: line('M1 9H11M3 10L10 2', '#888', 1) + snapPoint(5, 7),
    hand: line('M3 5C2 10 5 11 7 11C10 11 10 8 10 6H7L5 3', '#777', 1) + snapPoint(4, 3),
    step: line('M3 11H6V2H10', '#555', 1.2),
    triangle: line('M6 2L11 10.500H1Z', '#333', 1.3),
    hatch: line('M1 7L6 1M1 11L9 1M4 11L11 2M8 11L11 7', '#333', 1.3),
    set: '<path d="M1.500 4.500L4 2H11V9H1.500Z" fill="#c6d3de" stroke="#5a6c7d"/>' + line('M7 11V8A2 2 0 0 1 11 8V11', R, 1.4),
    gear: '<circle cx="6" cy="6" r="3" fill="none" stroke="#666" stroke-width="1.800"/>' + line('M6 1V3M6 9V11M1 6H3M9 6H11', '#666', 1.6),
    box: line('M1.500 4H10.500V10.500H1.500Z', '#555', 1.2) + fill('M4 1H8V5H4ZM3 5H9L6 8Z', '#667'),
    boxin: line('M3 5H11V9H3Z', '#888', 1) + fill('M4 3H7V9H4ZM1 4H4V6H1Z', '#667'),
    calendar: '<path d="M1 2H11V10H1Z" fill="#f3dada" stroke="#884a50"/>' + line('M1 5H11M4 5V10M8 5V10', '#a66', .8) + fill('M1 1H11V3H1ZM2 10H10V12H2Z', R),
    refresh: line('M9.500 8A4 4 0 1 1 9 3.500', '#333', 2) + fill('M7 5H11V1Z', '#333'),
    cycle: line('M2 5A4 3 0 0 1 9 3M10 7A4 3 0 0 1 3 9', '#444', 1.6) + fill('M7 4H11V1ZM5 8H1V11Z', '#444'),
    cyclebox: line('M2 3H7M2 3V7M5 5H10V10H5Z', '#555', 1.4) + fill('M6 1L9 3L6 5ZM6 7H9V9H6Z', '#333'),
    redbox: line('M2 3H10V11H2Z', R, 1.2) + fill('M4 1H8V3H4Z', '#666') + line('M4 5L8 9M8 5L4 9', R, 1.8),
    window: '<path d="M1 2H11V10H1Z" fill="#eee" stroke="#777"/>' + fill('M1 1.500H11V4H1Z', '#666') + fill('M3 6H8V9H3Z', '#99a'),
    left: frameBox + fill('M8 2.500V9.500L3.500 6Z', '#111'),
    right: frameBox + fill('M4 2.500V9.500L8.500 6Z', '#111'),
    up: frameBox + fill('M2.500 8H9.500L6 4Z', '#111'),
    down: frameBox + fill('M2.500 4H9.500L6 8Z', '#111'),
    bracket: line('M2 4V2H4M8 2H10V4M10 8V10H8M4 10H2V8M4 2H8M2 4V8M10 4V8M4 10H8', '#44606f', 1) + fill('M1 1H3V3H1ZM9 1H11V3H9ZM1 9H3V11H1ZM9 9H11V11H9Z', '#345'),
    blackbox: fill('M2 6L7 1H11V6L6 11L1 10Z', '#222') + line('M4 6H8V3', '#fff', 1),
    househalf: fill('M1 5L7 1L11 4L9 5L6 3Z', '#222') + line('M3 6V11M9 5V10H6V6', '#333', 1.2),
    house: line('M1 6L6 1.500L11 6M2.500 5V10.500H9.500V5M5 10V7H7V10', '#222', 1.2),
    houseline: line('M2 11V5L6 1.500L10 5V11Z', '#555', 1),
    boxtop: '<path d="M1.500 1.500H10.500V4.500H1.500ZM2.500 4.500H9.500V10.500H2.500Z" fill="#fff" stroke="#555"/>',
    bluegrid: line('M6 1V11M1 6H11M2 2L10 10M2 10L10 2', '#3b4fa8', 1.4) + fill('M4 4H8V8H4Z', '#3b4fa8'),
    axis3: line('M6 1V10M2 5L6 8L10 5', '#446', 1.2) + fill('M4 3H8L6 0ZM3 7H9L6 12Z', '#446'),
    boxview: frameBox + line('M3 8L6 5L9 8M6 3H9', '#777', 1),
    redcube: '<path d="M1 6L5 2H11V6L7 10H1Z" fill="#f1d0d2" stroke="#a5303a"/>' + line('M1 6H7V10M7 6L11 2', '#a5303a', 1),
    eye: line('M1 6C3 2 9 2 11 6M2 11H10', '#555', 1.4) + fill('M4 4H8V8H4Z', '#444'),
    redflag: fill('M1 2H11V7L7 9V7H4V10H1Z', '#b31522'),
    redwall: fill('M1 2H10V6H1Z', R) + line('M3 6V10M7 6V8H10V4', R, 1.8),
    redi: line('M2 2H10M2 10H10M4 2V10M8 2V10', R, 1.2),
    redframe: line('M1 2H11M1 10H11M3 4H9V8H3Z', R, 1.2),
    redcorner: line('M1.500 10V1.500H10.500V6H6V10ZM4 4H8', R, 1.3),
    dim: line('M1.500 1V10M10.500 1V10M1 5H11M4 3V6M8 4V8', R, 1.2),
    redhatch: line('M1.500 1.500H10.500V10.500H1.500ZM4 4H8V8H4ZM1 6H4M8 4L10 2', R, 1.2),
    redhouse: line('M1 6L6 2L11 6M2 6V10.500H10V6M5 10V7H7V10M2 6H10', R, 1.1),
    rafters: line('M1 9.500L6 3L11 9.500ZM4 9V6H8V9', R, 1.2),
    redbrush: fill('M1 8H11V11H1Z', '#d98a8f') + line('M4 8L9 2', '#555', 1.8) + fill('M7 1H11V4H7Z', '#c9a44a'),
    redroof: fill('M1 5L6 1L11 5Z', R) + fill('M5 5H9V11H5Z', '#555') + fill('M1 4H4V7H1Z', R),
    byalign: blueDot(1, 2, 7, 8) + yellowDot(5, 4, 5, 4),
    bymid: blueDot(1, 4, 4, 4) + blueDot(7, 4, 4, 4) + yellowDot(4, 2, 3, 8),
    lines: line('M1 2H11M1 6H8M1 10H11', '#45688f', 1.3),
    lines2: line('M1 2.500H11M1 6H11M1 9.500H11', '#456fa8', 1.6),
    lines3: line('M1 2H11M1 5H11M1 9.500H11', '#2f568f', 2),
    byleft: blueDot(1, 2, 5, 8) + yellowDot(6, 4, 4, 4),
    byright: yellowDot(1, 4, 4, 4) + blueDot(5, 2, 6, 8),
    byvert: yellowDot(4, 1, 4, 4) + blueDot(3, 5, 6, 6),
    bytop: fill('M1 3H11V5H1Z', '#345') + blueDot(3, 5, 6, 6) + yellowDot(4, 1, 4, 2),
    arch: line('M2 11V4L5 1.500L9 4V11', '#666', 1) + line('M7 10H11', '#888', 1),
    hshape: line('M2 3V9M10 3V9M2 6H10M1 4H4M8 4H11', '#444', 1.2),
    poly: line('M2 7L6 2L11 6L7 10Z', '#444', 1.2),
    polys: line('M1 8L4 4L7 7L4 10ZM6 4L9 1L11 5V10H8', '#555', 1.1),
    circle: '<circle cx="6" cy="6" r="4.500" fill="#fff" stroke="#4a7ea8"/>',
    rect: '<rect x="1.500" y="2" width="9" height="8" fill="#fff" stroke="#4a7ea8"/>',
    text: line('M1.500 4V2H10.500V4M6 2V10M4 10.500H8', '#28568f', 2),
    dimblue: line('M1.500 3V9M10.500 3V9M1 6H11M5 4V8M7 4V8', '#4a6f98', 1.1),
    fillrect: '<rect x="1.500" y="1.500" width="9" height="9" fill="#a9b6c2" stroke="#333"/>' + line('M3 4H9M3 7H9M4 2V10M7 2V10', '#e1e7ec', .6),
    bucket: '<path d="M2 6L6 2L10 6L6 10Z" fill="#cfe0ef" stroke="#4a6f98"/>' + fill('M9 6H12V10H10Z', '#d47a2a'),
    wall: fill('M1 1H11V3H1ZM1 9H11V11H1Z', '#8a8a8a') + fill('M1 3.500H11V8.500H1Z', '#c98478') + line('M1 6H11M4 3V6M8 6V9', '#fff', .6),
    arcgray: line('M2 2C7 1 10 5 11 11', '#bbb', .9) + fill('M1 1H3V3H1Z', '#bbb'),
    inner: '<path d="M3 2H7V11H3Z" fill="#dcdcdc" stroke="#888"/>' + line('M8.500 1V11', R, 1.2) + line('M3 1H7', R, 1),
    foil: '<path d="M1 3H7V10H1Z" fill="#c5daee" stroke="#44668f"/>' + fill('M5 5L9 1L11 7L8 11H4Z', '#4d6f9a') + line('M7 3H10', '#e8b84b', 1.6),
    undo: line('M4 10C12 10 11 2 3 4', '#35558f', 1.8) + fill('M1 4.500L5.500 1V7Z', '#35558f'),
    redo: line('M8 10C0 10 1 2 9 4', '#ccc', 1.4) + fill('M11 4.500L7 1.500V7Z', '#ccc'),
    bulb: '<circle cx="6" cy="4" r="3" fill="#f3ce3a" stroke="#a88a1a"/>' + fill('M4.500 7H7.500V11H4.500Z', '#555'),
    info: '<circle cx="6" cy="6" r="5" fill="#1f7ad0"/>' + line('M6 5V9M6 2.500V4', '#fff', 1.6),
    pin: line('M4 2H9M5 2V6M8 2V6M3 6.500H10M6.500 7V11', '#777', .9),
    orange: '<rect x="1" y="1" width="10" height="10" fill="#f0592a" stroke="#c9401a"/>',
    sheet: '<rect x="1" y="1.500" width="10" height="9" fill="#dde1e4" stroke="#555"/>' + fill('M1 1H11V3.500H1Z', '#555') + line('M3 6H9M3 8H9M5 4V10', '#889', .8),
    zones: fill('M1 1H11V11H1Z', '#3c5878') + fill('M3 4H7V9H3Z', '#7fa4ca') + line('M1 2H11', '#bbc', 1),
    tblsmall: table + fill('M3 4.500H6V7H3ZM6 7H9V9.500H6Z', '#355c8c'),
    tbltree: table + line('M3 4.500V9H5M3 6.500H5M6 6.500H9M6 9H9', '#355c8c', 1),
    tblcol: table + line('M6 4V10', '#778', 1),
    tblcols: table + line('M4 4V10M6.500 4V10M9 4V10', '#888', .8),
    tblgrid: table + line('M1 6.500H11M4.500 4V10M8 4V10', '#556', 1),
    tblfill: table + fill('M2 4H10V10H2Z', '#b4d0ea'),
    tblred: table + fill('M4 5H8V9H4ZM7 4H9.500V6H7Z', R),
    tblx: table + line('M3 4L9 10M9 4L3 10', R, 1.6),
    cubegray: line('M2 5H8V11H2ZM4 5V2H11V8H8M4 2L2 5', '#777', 1),
    more: line('M4 1L6 3L4 5M7 1L9 3L7 5', '#333', 1) + fill('M6 9H8V11H6Z', '#333'),
    keyboard: '<rect x="1" y="2" width="10" height="8" fill="#8898a6" stroke="#445"/>' + line('M2.500 4.500H9.500M2.500 7.500H9.500', '#dfe7ee', 1),
    listred: line('M1 3H8M1 9H8', '#666', 1.2) + line('M1 6H11', R, 1.4) + line('M10 2V10', '#777', 1),
    redpage: line('M3 1H8V10H3Z', '#999', .9) + fill('M5 1H9V4H5Z', R),
    cross: line('M6 1V11M1 6H11', R, 1.4),
    key: line('M6 6H11M8 6V8M10 6V8', '#556', 1.2) + '<circle cx="3.500" cy="6" r="2" fill="#6d8fb8" stroke="#35558f"/>',
    colorbox: fill('M1 1H6V6H1Z', '#e2b52b') + fill('M6 1H11V6H6Z', '#a83a8a') + fill('M1 6H6V11H1Z', '#7a4ab0') + fill('M6 6H11V11H6Z', '#d2691e'),
    layers: '<path d="M1.500 1.500H8V6H1.500ZM4 5H11V10.500H4Z" fill="#cfe0ef" stroke="#557"/>',
    curve: line('M1 3H4V9C8 12 7 1 11 3', '#28568f', 1.8),
    dimh: line('M2 1V11M10 1V11M2 3H10M4 8H8', '#667', 1.1),
    drawer: '<path d="M2 4L4 1.500H11L9.500 4V10.500H2Z" fill="#ddd" stroke="#888"/>' + line('M2 6H9', '#888', 1),
    addpage: doc + line('M9 6V11M6.500 8.500H11.500', '#3aa03a', 1.8),
    grid4: line('M1.500 2H10.500V10H1.500ZM6 2V10M1.500 6H10.500', '#333', 1.3),
    checkpage: line('M2 3H9V10.500H2Z', '#555', 1) + line('M5 5L7 7L11 1', '#3aa03a', 1.8),
    note: line('M1.500 2H10.500V10H1.500ZM7 10V7H10', '#555', 1),
    check: '<rect x="1.500" y="1.500" width="9" height="9" fill="#fff" stroke="#444"/>' + line('M3.500 6L5.500 8L8.500 3.500', '#222', 1.2),
    door: line('M1 1.500H11', '#555', 1) + line('M3 10V4H7V10M1 10.500H11', R, 1.1),
    opening: line('M1 1.500H11M1 10.500H11', '#777', 1) + fill('M4 4H8V8H4Z', R),
    column: line('M1 1.500H11M3 10.500H9', '#777', 1) + line('M4 2V10M7 2V10', R, 1.3),
    niche: line('M1 1.500H11', '#555', 1.2) + line('M3 11V4H9V11', R, 1.2),
    passage: line('M1 1.500H11', '#777', 1) + line('M3 4V10M9 4V10M3 7H9', '#222', 2),
    ceiling: line('M1 1.500H11M1 10.500H11', R, 1) + line('M3 8H6V5H9', '#777', 1),
    plan2d: line('M2 2H10V10H2Z', R, 1) + fill('M1 1H4V4H1ZM8 1H11V4H8ZM1 8H4V11H1ZM8 8H11V11H8Z', '#333'),
    plan3d: line('M6 1L10.500 3.500V8.500L6 11L1.500 8.500V3.500ZM1.500 3.500L6 6L10.500 3.500M6 6V11', R, 1.1),
    bim: line('M1 2H10V5H5V8H1', '#777', 1.1) + line('M5 11V7H9V10M2 4L9 11', R, 1.1)
};

function icon(name) {
    return `<svg width="100%" height="100%" viewBox="0 0 12 12" aria-hidden="true">${icons[name]}</svg>`;
}

document.querySelectorAll('[data-tools]').forEach(bar => {
    bar.innerHTML = bar.dataset.tools.split(' ').map(entry => {
        if (entry === '|') {
            return '<span class="sep"></span>';
        }
        const name = entry.replace('*', '');
        const on = entry.endsWith('*') ? ' on' : '';
        return `<button class="tool${on}" aria-label="${name}">${icon(name)}</button>`;
    }).join('');
});

document.querySelectorAll('[data-icon]').forEach(el => {
    el.innerHTML = icon(el.dataset.icon);
});

const shortcuts = [
    ['F1', 'check', 'Prohlížeč komp...'], ['F2', 'check', 'Fólie/Zóny'], ['F3', 'check', 'Zóny'],
    ['F4', 'wall', 'Stěny'], ['F5', 'door', 'Dveře'], ['F6', 'opening', 'Okna'],
    ['F7', 'column', 'Sloupy'], ['F8', 'ceiling', 'Stropy'], ['F9', 'redcorner', 'Prostory'],
    ['F0', 'passage', 'Prostupy'], ['S1', 'niche', 'Niky'], ['S2', 'redhatch', 'Schody'],
    ['S3', 'dim', 'Kótovat'], ['S4', 'redcorner', 'Konstrukce stř...'], ['S5', 'rafters', 'Konstrukce kro...'],
    ['S6', 'redhouse', 'Řez/Pohled'], ['S7', 'plan2d', 'Generovat 2D'], ['S8', 'plan3d', 'Generovat 3D'],
    ['S9', 'bim', 'CAD do BIM'], ['S0', 'redbrush', 'Úpravy Stěn']
];

document.querySelector('.shortcuts').innerHTML = shortcuts.map(([key, name, label]) =>
    `<li><b>${key}</b><span data-icon="${name}">${icon(name)}</span>${label}</li>`
).join('');

// level, state (- open, + closed, empty for a leaf), label
const tree = [
    [0, '-', 'ZAK Komponenty'], [1, '', 'Moje soubory'], [1, '-', 'Stěny'],
    ...['Betonové základy', 'Cihelné stěny', 'Dělící stěny', 'Knauf', 'Obecné', 'Ostatní', 'Porotherm',
        'Prefa Rastra', 'Rigips', 'Sendvičové konstrukc', 'Sendvičové stěny', 'Stomix', 'Supertherm',
        'Velox', 'Vrstvy', 'Ytong', 'ŽB stěny'].map(name => [2, '+', name]),
    [1, '-', 'Okna'],
    ...['Dělená', 'Franc dělená', 'Franc jednoduchá', 'Jednoduchá', 'Kulatá', 'Oblouková', 'Ostatní',
        'Otvory'].map(name => [2, '+', name]),
    ...['Dveře', 'Ostění', 'Niky', 'Drážky', 'Sloupy', 'Stropy', 'Prostory', 'Popis prostorů',
        'Rendering'].map(name => [1, '+', name]),
    [0, '+', 'Vybavení'], [0, '+', 'Výkresové styly'], [0, '+', 'Symboly']
];

document.querySelector('.tree').innerHTML = tree.map(([level, state, label]) => {
    const toggle = { '-': '', '+': 'plus', '': 'none' }[state];
    return `<li>${'<span class="guide"></span>'.repeat(level)}<span class="toggle ${toggle}"></span><span class="folder"></span>${label}</li>`;
}).join('');

// size, drawn width, blue sill position
const items = [
    ['600x2000', 11, 'top'], ['600x2200', 10, 'bottom'], ['600x2400', 9, 'bottom'], ['700x2000', 13, 'bottom'],
    ['700x2200', 13, 'bottom'], ['700x2400', 11, 'both'], ['800x2000', 15, 'bottom'], ['800x2200', 13, 'bottom'],
    ['800x2400', 12, 'both'], ['900x2000', 16, 'both']
];

function windowDrawing(w, sill) {
    let rows = '';
    for (let i = 1; i < 5; i++) {
        rows += `M2 ${2 + i * 6.6}H${w - 2}`;
    }
    const top = sill !== 'bottom' ? `M3 2.500H${w - 3}` : '';
    const bottom = sill !== 'top' ? `M3 33.500H${w - 3}` : '';
    return `<svg width="${w}" viewBox="0 0 ${w} 37">
        <rect x=".8" y=".8" width="${w - 1.6}" height="35.400" fill="#fff" stroke="#f9b377" stroke-width="1.600"/>
        <path d="M2.500 2H${w - 2.5}V34.500H2.500ZM${w / 2} 2V34${rows}" fill="none" stroke="#f08a3c" stroke-width=".9"/>
        <path d="${top}${bottom}" stroke="#7a78e0" stroke-width="1"/>
    </svg>`;
}

document.querySelector('.items').innerHTML = items.map(([size, w, sill]) =>
    `<div class="item">${windowDrawing(w, sill)}<p>franc okno 1-křídlé<br>${size} děl 2x5.zac</p></div>`
).join('');
```
